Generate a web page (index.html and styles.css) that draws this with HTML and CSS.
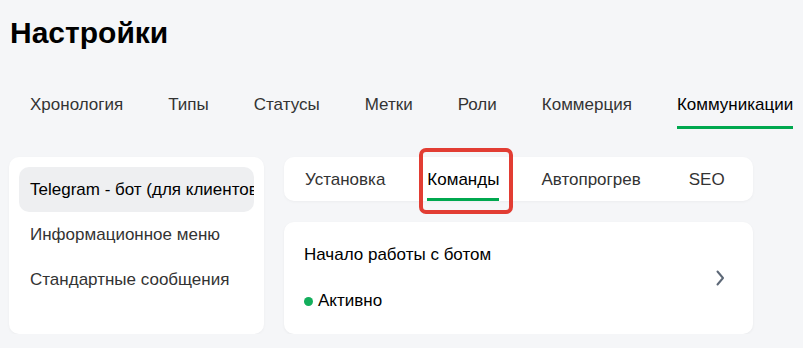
FILE: index.html
```html
<!DOCTYPE html>
<html lang="ru">
<head>
    <meta charset="UTF-8">
    <meta name="viewport" content="width=device-width, initial-scale=1.0">
    <title>Настройки</title>
    <link rel="stylesheet" href="styles.css">
</head>
<body>
    <div class="page">
        <h1 class="title">Настройки</h1>

        <nav class="tabs">
            <a class="tab">Хронология</a>
            <a class="tab">Типы</a>
            <a class="tab">Статусы</a>
            <a class="tab">Метки</a>
            <a class="tab">Роли</a>
            <a class="tab">Коммерция</a>
            <a class="tab active">Коммуникации</a>
        </nav>

        <div class="layout">
            <aside class="sidebar">
                <div class="side-item active">Telegram - бот (для клиентов)</div>
                <div class="side-item">Информационное меню</div>
                <div class="side-item">Стандартные сообщения</div>
            </aside>

            <main class="content">
                <div class="subtabs">
                    <a class="subtab">Установка</a>
                    <a class="subtab active marked">Команды</a>
                    <a class="subtab">Автопрогрев</a>
                    <a class="subtab seo">SEO</a>
                </div>

                <div class="command">
                    <div class="command-info">
                        <div class="command-name">Начало работы с ботом</div>
                        <div class="command-status"><span class="dot"></span>Активно</div>
                    </div>
                    <svg class="chevron" width="10" height="16" viewBox="0 0 10 16">
                        <path d="M2.5 1.5 L8 8 L2.5 14.5" fill="none" stroke="#5d6877" stroke-width="2" stroke-linecap="round" stroke-linejoin="round"/>
                    </svg>
                </div>
            </main>
        </div>
    </div>
</body>
</html>
```

FILE: styles.css
```css
* {
    margin: 0;
    padding: 0;
    box-sizing: border-box;
}

body {
    background: #f5f6f8;
    font-family: "Liberation Sans", Arial, sans-serif;
    color: #333;
}

.page {
    padding: 16px 9px 0 9px;
}

.title {
    font-size: 30px;
    font-weight: bold;
    color: #000;
    line-height: 34px;
    padding-left: 1px;
}

.tabs {
    display: flex;
    gap: 45px;
    padding: 45px 0 0 21px;
}

.tab {
    font-size: 17px;
    line-height: 20px;
    color: #333;
    padding-bottom: 11px;
    border-bottom: 3px solid transparent;
    cursor: pointer;
}

.tab.active {
    color: #000;
    border-bottom-color: #00a84f;
}

.layout {
    display: flex;
    gap: 20px;
    margin-top: 28px;
}

.sidebar {
    width: 255px;
    background: #fff;
    border-radius: 10px;
    padding: 10px;
    box-shadow: 0 1px 3px rgba(0, 0, 0, 0.04);
}

.side-item {
    height: 45px;
    line-height: 45px;
    padding-left: 11px;
    font-size: 17px;
    color: #333;
    white-space: nowrap;
    overflow: hidden;
    border-radius: 10px;
}

.side-item.active {
    background: #eeeff1;
    color: #000;
}

.content {
    width: 469px;
    display: flex;
    flex-direction: column;
    gap: 21px;
}

.subtabs {
    display: flex;
    gap: 42px;
    height: 44px;
    padding-left: 21px;
    background: #fff;
    border-radius: 10px;
    box-shadow: 0 1px 3px rgba(0, 0, 0, 0.04);
}

.subtab {
    position: relative;
    font-size: 17px;
    line-height: 20px;
    padding-top: 13px;
    color: #333;
    border-bottom: 3px solid transparent;
    cursor: pointer;
}

.subtab.active {
    color: #000;
    border-bottom-color: #00a84f;
}

.subtab.seo {
    margin-left: 6px;
}

/* red highlight frame drawn over the tab */
.subtab.marked::after {
    content: "";
    position: absolute;
    left: -8px;
    right: -14px;
    top: -9px;
    bottom: -16px;
    border: 4px solid #e23d33;
    border-radius: 7px;
}

.command {
    display: flex;
    align-items: center;
    justify-content: space-between;
    height: 112px;
    padding: 23px 28px 23px 20px;
    background: #fff;
    border-radius: 10px;
    box-shadow: 0 1px 3px rgba(0, 0, 0, 0.05);
}

.command-info {
    display: flex;
    flex-direction: column;
    gap: 26px;
}

.command-name {
    font-size: 17px;
    line-height: 20px;
    color: #000;
}

.command-status {
    display: flex;
    align-items: center;
    gap: 5px;
    font-size: 17px;
    line-height: 20px;
    color: #000;
}

.dot {
    width: 9px;
    height: 9px;
    border-radius: 50%;
    background: #13ae5c;
}

.chevron {
    display: block;
}
```
